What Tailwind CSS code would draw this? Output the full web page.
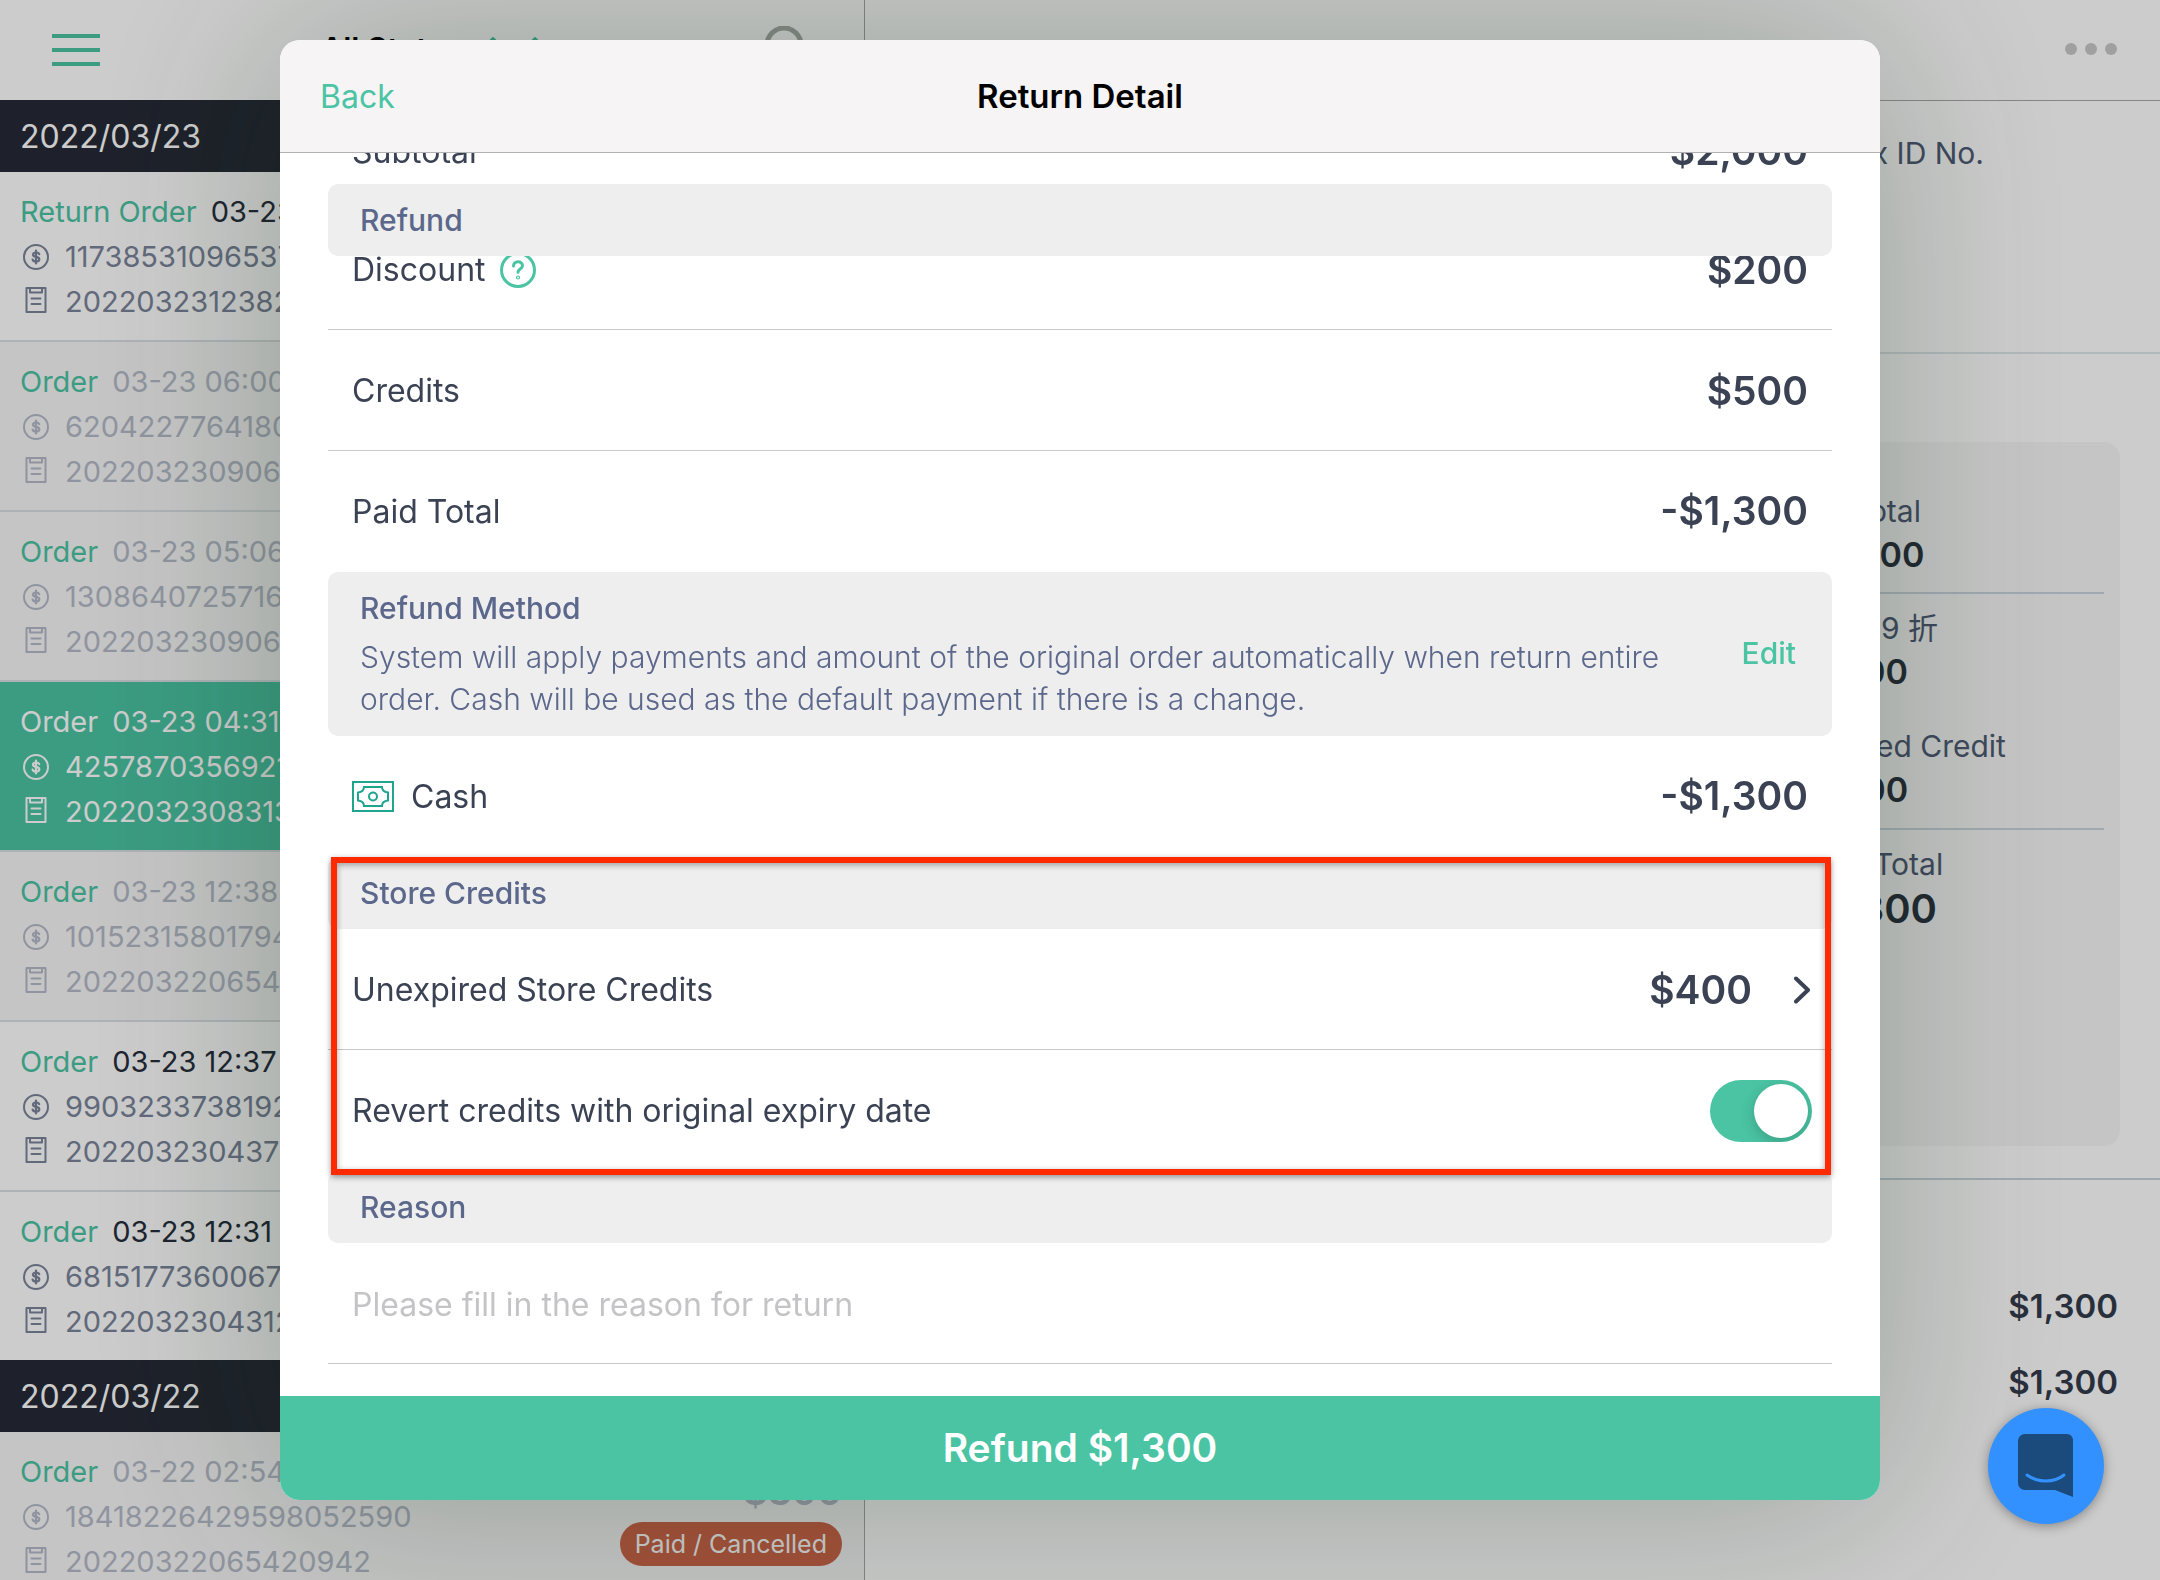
<!DOCTYPE html>
<html lang="en">
<head>
  <meta charset="UTF-8" />
  <meta name="viewport" content="width=device-width, initial-scale=1.0" />
  <title>POS | Return Detail</title>
  <script src="https://cdn.jsdelivr.net/npm/@tailwindcss/browser@4"></script>
</head>
<body class="h-screen overflow-hidden bg-white font-['Inter','Noto_Sans_CJK_TC',sans-serif] text-[#3a4253]">

  <!-- Shared icons -->
  <svg class="hidden">
    <symbol id="coin" viewBox="0 0 26 26" fill="none" stroke="currentColor" stroke-width="2" stroke-linecap="round">
      <circle cx="13" cy="13" r="12" />
      <path d="M16.2 10.2c-.4-1.200-1.500-1.700-3.200-1.700-1.800 0-3 .8-3 2.200 0 3 6.300 1.400 6.300 4.600 0 1.500-1.300 2.300-3.300 2.300-1.900 0-3.100-.7-3.400-2M13 6.500v13" stroke-width="2.200" />
    </symbol>
    <symbol id="receipt" viewBox="0 0 22 26" fill="none" stroke="currentColor" stroke-width="2" stroke-linecap="round" stroke-linejoin="round">
      <rect x="1.500" y="1" width="19" height="24" />
      <path d="M5 1.500v4h12v-4M6.500 11.500h9M6.500 17h9" />
    </symbol>
  </svg>

  <div class="flex h-full">

    <!-- Order list -->
    <aside class="flex w-2/5 shrink-0 flex-col overflow-hidden">
      <header class="flex h-[100px] shrink-0 items-center bg-white px-[56px] pl-[52px]">
        <button type="button" aria-label="Menu" class="flex w-12 flex-col gap-[10px]">
          <span class="h-1 bg-[#4ac4a3]"></span>
          <span class="h-1 bg-[#4ac4a3]"></span>
          <span class="h-1 bg-[#4ac4a3]"></span>
        </button>
        <div class="flex flex-1 items-center justify-center gap-5 pb-[2px] pl-2 text-[31px] font-semibold text-black">
          All Status
          <svg class="h-7 w-16 text-[#4ac4a3]" viewBox="0 0 64 28" fill="currentColor" stroke="currentColor" stroke-width="2" stroke-linejoin="round"><path d="M10 3l9 9H1zM52 3l9 9H43z" /></svg>
        </div>
        <button type="button" aria-label="Search" class="text-[#a9aeab]">
          <svg class="size-12" viewBox="0 0 48 48" fill="none" stroke="currentColor" stroke-width="5"><circle cx="24" cy="19" r="17" /><path d="M36 32l9 10" /></svg>
        </button>
      </header>

      <h2 class="flex h-[72px] shrink-0 items-center bg-[#262a36] px-5 pt-[2px] text-[32px] text-white">2022/03/23</h2>
      <ul class="shrink-0 text-[29px] leading-[45px]">
        <li class="h-[170px] border-b-2 border-[#d9dfe4] px-5 pt-[17px] text-[#7a849a]">
          <p class="flex gap-[14px] text-[#272e3c]"><a href="#" class="text-[#4ac4a3]">Return Order</a>03-23 06:12</p>
          <p class="flex items-center"><svg class="mr-4 ml-[3px] size-[26px]"><use href="#coin" /></svg>11738531096537</p>
          <p class="flex items-center"><svg class="mr-[18px] mb-1 ml-[5px] h-[26px] w-[22px]"><use href="#receipt" /></svg>20220323123826</p>
        </li>
        <li class="h-[170px] border-b-2 border-[#d9dfe4] bg-[#f7f7f7] px-5 pt-[17px] text-[#b4bac8]">
          <p class="flex gap-[14px]"><a href="#" class="text-[#4ac4a3]">Order</a>03-23 06:00</p>
          <p class="flex items-center"><svg class="mr-4 ml-[3px] size-[26px]"><use href="#coin" /></svg>62042277641801</p>
          <p class="flex items-center"><svg class="mr-[18px] mb-1 ml-[5px] h-[26px] w-[22px]"><use href="#receipt" /></svg>20220323090612</p>
        </li>
        <li class="h-[170px] border-b-2 border-[#d9dfe4] bg-[#f7f7f7] px-5 pt-[17px] text-[#b4bac8]">
          <p class="flex gap-[14px]"><a href="#" class="text-[#4ac4a3]">Order</a>03-23 05:06</p>
          <p class="flex items-center"><svg class="mr-4 ml-[3px] size-[26px]"><use href="#coin" /></svg>13086407257162</p>
          <p class="flex items-center"><svg class="mr-[18px] mb-1 ml-[5px] h-[26px] w-[22px]"><use href="#receipt" /></svg>20220323090604</p>
        </li>
        <li class="h-[170px] border-b-2 border-[#d9dfe4] bg-[#4ac4a3] px-5 pt-[17px] text-white">
          <p class="flex gap-[14px]"><a href="#">Order</a>03-23 04:31</p>
          <p class="flex items-center"><svg class="mr-4 ml-[3px] size-[26px]"><use href="#coin" /></svg>42578703569210</p>
          <p class="flex items-center"><svg class="mr-[18px] mb-1 ml-[5px] h-[26px] w-[22px]"><use href="#receipt" /></svg>20220323083134</p>
        </li>
        <li class="h-[170px] border-b-2 border-[#d9dfe4] bg-[#f7f7f7] px-5 pt-[17px] text-[#b4bac8]">
          <p class="flex gap-[14px]"><a href="#" class="text-[#4ac4a3]">Order</a>03-23 12:38</p>
          <p class="flex items-center"><svg class="mr-4 ml-[3px] size-[26px]"><use href="#coin" /></svg>10152315801794</p>
          <p class="flex items-center"><svg class="mr-[18px] mb-1 ml-[5px] h-[26px] w-[22px]"><use href="#receipt" /></svg>20220322065410</p>
        </li>
        <li class="h-[170px] border-b-2 border-[#d9dfe4] px-5 pt-[17px] text-[#7a849a]">
          <p class="flex gap-[14px] text-[#272e3c]"><a href="#" class="text-[#4ac4a3]">Order</a>03-23 12:37</p>
          <p class="flex items-center"><svg class="mr-4 ml-[3px] size-[26px]"><use href="#coin" /></svg>99032337381928</p>
          <p class="flex items-center"><svg class="mr-[18px] mb-1 ml-[5px] h-[26px] w-[22px]"><use href="#receipt" /></svg>20220323043718</p>
        </li>
        <li class="h-[168px] px-5 pt-[17px] text-[#7a849a]">
          <p class="flex gap-[14px] text-[#272e3c]"><a href="#" class="text-[#4ac4a3]">Order</a>03-23 12:31</p>
          <p class="flex items-center"><svg class="mr-4 ml-[3px] size-[26px]"><use href="#coin" /></svg>68151773600672</p>
          <p class="flex items-center"><svg class="mr-[18px] mb-1 ml-[5px] h-[26px] w-[22px]"><use href="#receipt" /></svg>20220323043127</p>
        </li>
      </ul>

      <h2 class="flex h-[72px] shrink-0 items-center bg-[#262a36] px-5 pt-[2px] text-[32px] text-white">2022/03/22</h2>
      <ul class="shrink-0 text-[29px] leading-[45px]">
        <li class="flex h-[170px] justify-between bg-[#f7f7f7] pt-[17px] pr-[22px] pl-5 text-[#b4bac8]">
          <div>
            <p class="flex gap-[14px]"><a href="#" class="text-[#4ac4a3]">Order</a>03-22 02:54</p>
            <p class="flex items-center"><svg class="mr-4 ml-[3px] size-[26px]"><use href="#coin" /></svg>18418226429598052590</p>
            <p class="flex items-center"><svg class="mr-[18px] mb-1 ml-[5px] h-[26px] w-[22px]"><use href="#receipt" /></svg>20220322065420942</p>
          </div>
          <div class="flex flex-col items-end pt-5">
            <strong class="text-[38px] leading-[44px] font-semibold">$300</strong>
            <span class="mt-[9px] rounded-full bg-[#cf6549] px-[15px] text-[25px] leading-[44px] text-white">Paid / Cancelled</span>
          </div>
        </li>
      </ul>
    </aside>

    <!-- Order detail -->
    <main class="flex flex-1 flex-col border-l border-[#a8a8a8] text-[#4f5b75]">
      <header class="flex h-[101px] items-center justify-end border-b border-[#a8a8a8] px-[43px] pb-[2px]">
        <button type="button" aria-label="More" class="flex gap-2">
          <span class="size-3 rounded-full bg-[#c8c8c8]"></span>
          <span class="size-3 rounded-full bg-[#c8c8c8]"></span>
          <span class="size-3 rounded-full bg-[#c8c8c8]"></span>
        </button>
      </header>

      <section class="flex h-[253px] justify-end border-b-2 border-[#dee6ea] pt-[30px] pr-[176px] text-[30px] leading-[44px]">
        <p>Tax ID No.</p>
      </section>

      <section class="border-b-2 border-[#c8d4de] px-10 pt-[88px] pb-8 text-[30px]">
        <div class="flex h-[704px] justify-end rounded-2xl bg-[#f7f7f7] pt-[47px] pr-4 leading-[44px]">
          <dl class="w-[300px]">
            <dt>Subtotal</dt>
            <dd class="border-b-2 border-[#c8d4de] pb-[15px] text-[34px] font-semibold text-[#2b333f]">$2,000</dd>
            <dt class="mt-3">全館: 9 折</dt>
            <dd class="text-[34px] font-semibold text-[#2b333f]">-$200</dd>
            <dt class="mt-[30px]">Applied Credit</dt>
            <dd class="border-b-2 border-[#c8d4de] pb-4 text-[34px] font-semibold text-[#2b333f]">-$500</dd>
            <dt class="mt-3">Paid Total</dt>
            <dd class="pt-px text-[40px] font-semibold text-[#2b333f]">$1,300</dd>
          </dl>
        </div>
      </section>

      <section class="flex flex-col items-end gap-8 px-[42px] pt-[104px] text-[33px] leading-[44px] font-semibold text-[#333b4b]">
        <p>$1,300</p>
        <p>$1,300</p>
      </section>
    </main>
  </div>

  <!-- Return detail dialog -->
  <div class="fixed inset-0 bg-black/20"></div>
  <div role="dialog" aria-labelledby="dialog-title" class="fixed inset-x-0 top-10 bottom-20 mx-auto flex max-w-[1600px] flex-col overflow-hidden rounded-[20px] bg-white shadow-[0_0_200px_rgba(10,45,15,0.27)]">
    <header class="grid h-[113px] shrink-0 grid-cols-3 items-center border-b border-[#b2b2b4] bg-[#f6f4f5] px-10 pt-[2px] text-[33px]">
      <button type="button" class="justify-self-start text-[32px] text-[#4ac4a3]">Back</button>
      <h1 id="dialog-title" class="text-center font-semibold text-black">Return Detail</h1>
    </header>

    <div class="flex-1 overflow-hidden px-12 text-[32px]">
      <div class="-mt-[63px] flex h-[121px] items-center justify-between px-6 pt-[2px]">
        <span>Subtotal</span>
        <strong class="text-[39px] font-semibold">-$2,000</strong>
      </div>

      <h2 class="relative z-10 -mt-[27px] -mb-[47px] flex h-[72px] items-center rounded-[10px] bg-[#eee] px-8 text-[30px] font-medium text-[#5b678b]">Refund</h2>

      <div class="flex h-[121px] items-center justify-between border-b border-[#c8c8ca] px-6 pt-[2px]">
        <span class="flex items-center gap-[14px]">
          Discount
          <button type="button" aria-label="About discount" class="text-[#4ac4a3]">
            <svg class="size-9" viewBox="0 0 36 36" fill="none" stroke="currentColor" stroke-width="3" stroke-linecap="round" stroke-linejoin="round">
              <circle cx="18" cy="18" r="16.500" />
              <path d="M13.500 14c0-2.600 1.900-4.300 4.500-4.300s4.500 1.600 4.500 4c0 3.300-4.500 3.400-4.500 6.500" />
              <circle cx="18" cy="25.500" r=".6" />
            </svg>
          </button>
        </span>
        <strong class="text-[39px] font-semibold">$200</strong>
      </div>
      <div class="flex h-[121px] items-center justify-between border-b border-[#c8c8ca] px-6 pt-[2px]">
        <span>Credits</span>
        <strong class="text-[39px] font-semibold">$500</strong>
      </div>
      <div class="flex h-[121px] items-center justify-between px-6">
        <span>Paid Total</span>
        <strong class="text-[39px] font-semibold">-$1,300</strong>
      </div>

      <div class="flex items-center justify-between rounded-[10px] bg-[#eee] pt-[14px] pr-9 pb-4 pl-8 text-[30px] text-[#5b678b]">
        <div>
          <h2 class="leading-[44px] font-medium">Refund Method</h2>
          <p class="mt-[6px] leading-[42px] font-light">System will apply payments and amount of the original order automatically when return entire<br />order. Cash will be used as the default payment if there is a change.</p>
        </div>
        <button type="button" class="font-medium text-[#4ac4a3]">Edit</button>
      </div>

      <div class="flex h-[121px] items-center justify-between px-6">
        <span class="flex items-center gap-[17px]">
          <svg class="h-[31px] w-[42px] text-[#1fa58e]" viewBox="0 0 42 31" fill="none" stroke="currentColor" stroke-width="2">
            <rect x="1" y="1" width="40" height="29" />
            <path d="M12 6h18c0 3 2.500 5 6 5.500v8c-3.500.5-6 2.500-6 5.500H12c0-3-2.500-5-6-5.500v-8c3.500-.5 6-2.500 6-5.500z" />
            <circle cx="21" cy="15.500" r="4" />
          </svg>
          Cash
        </span>
        <strong class="text-[39px] font-semibold">-$1,300</strong>
      </div>

      <section class="relative">
        <h2 class="flex h-[72px] items-center rounded-[10px] bg-[#eee] px-8 text-[30px] font-medium text-[#5b678b]">Store Credits</h2>
        <a href="#" class="flex h-[121px] items-center justify-between border-b border-[#c8c8ca] pt-[2px] pr-[22px] pl-6">
          <span>Unexpired Store Credits</span>
          <span class="flex items-center gap-[42px]">
            <strong class="text-[39px] font-semibold">$400</strong>
            <svg class="h-7 w-4" viewBox="0 0 16 28" fill="none" stroke="currentColor" stroke-width="4" stroke-linecap="round" stroke-linejoin="round"><path d="M2 2.500L14 14 2 25.500" /></svg>
          </span>
        </a>
        <div class="flex h-[121px] items-center justify-between pr-5 pl-6">
          <label for="revert">Revert credits with original expiry date</label>
          <input id="revert" type="checkbox" checked class="relative h-[62px] w-[102px] appearance-none overflow-hidden rounded-full bg-gray-300 before:absolute before:top-1 before:left-1 before:size-[54px] before:rounded-full before:bg-white before:shadow-[0_4px_14px_rgba(0,0,0,0.2)] checked:bg-[#4ac4a3] checked:before:left-11" />
        </div>
        <div class="pointer-events-none absolute top-0 right-px -bottom-1 left-[3px] z-10 border-6 border-[#ff2a00] shadow-[0_2px_6px_rgba(0,0,0,0.4),inset_0_2px_6px_rgba(0,0,0,0.35)]"></div>
      </section>

      <h2 class="flex h-[72px] items-center rounded-[10px] bg-[#eee] px-8 text-[30px] font-medium text-[#5b678b]"><label for="reason">Reason</label></h2>
      <input id="reason" type="text" placeholder="Please fill in the reason for return" class="h-[121px] w-full border-b border-[#c8c8ca] px-6 pt-[2px] outline-none placeholder:text-[#c4c4c6]" />
    </div>

    <button type="submit" class="h-[104px] shrink-0 bg-[#4ac4a3] text-[39px] font-semibold text-white">Refund $1,300</button>
  </div>

  <!-- Chat launcher -->
  <button type="button" aria-label="Chat" class="fixed right-14 bottom-14 flex size-[116px] items-center justify-center rounded-full bg-[#3391ff] shadow-[0_2px_12px_rgba(0,0,0,0.35)]">
    <svg class="h-16 w-14" viewBox="0 0 56 64" fill="none">
      <path d="M7 0h42a6 6 0 0 1 6 6v57l-18-7H7a7 7 0 0 1-7-7V7a7 7 0 0 1 7-7z" fill="#1b4a7d" />
      <path d="M9 41c11 8 27 8 37 0" stroke="#3391ff" stroke-width="3" stroke-linecap="round" />
    </svg>
  </button>
</body>
</html>
